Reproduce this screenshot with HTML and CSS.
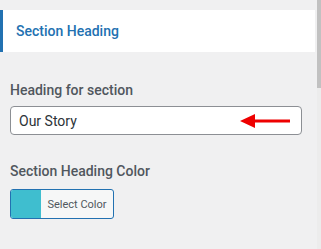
FILE: index.html
```html
<!DOCTYPE html>
<html lang="en">
<head>
    <meta charset="UTF-8">
    <title>Section Heading</title>
    <link rel="stylesheet" href="styles.css">
</head>
<body>
    <div class="panel">
        <!-- section title -->
        <div class="section-title">Section Heading</div>

        <div class="control">
            <label class="control-label" for="heading">Heading for section</label>
            <div class="input-wrap">
                <input type="text" id="heading" class="text-input" value="Our Story">
                <svg class="arrow" width="50" height="16" viewBox="0 0 50 16">
                    <polygon points="0,8 15,1 15,15" fill="#ee0000"/>
                    <rect x="13" y="6.5" width="37" height="3" fill="#ee0000"/>
                </svg>
            </div>
        </div>

        <div class="control color-control">
            <span class="control-label">Section Heading Color</span>
            <button class="color-btn">
                <span class="swatch"></span>
                <span class="color-text">Select Color</span>
            </button>
        </div>
    </div>
    <div class="scrollbar"><div class="thumb"></div></div>
</body>
</html>
```

FILE: styles.css
```css
html, body
{
    margin: 0; padding: 0; height: 100%;
}

body
{
    background-color: #f0f0f1; font-family: Roboto, "Liberation Sans", sans-serif;
    display: flex; overflow: hidden;
}

.panel
{
    flex: 1; padding-top: 10px;
}

.section-title
{
    background-color: #ffffff; border-left: 3px solid #2271b1;
    height: 42px; box-sizing: border-box; margin-right: 2px;
    padding-left: 13px; display: flex; align-items: center;
    font-size: 14px; font-weight: 500; color: #2271b1;
}

.control
{
    padding: 0 10px; margin-top: 30px;
}

.color-control { margin-top: 28px; }

.control-label
{
    display: block; font-size: 14px; line-height: 16px; font-weight: 500; color: #50575e;
    margin-bottom: 8px;
}

.color-control .control-label { margin-bottom: 10px; }

.input-wrap { position: relative; width: 292px; }

.text-input
{
    display: block; width: 100%; height: 29px; box-sizing: border-box;
    border: 1px solid #8c8f94; border-radius: 4px; background-color: #ffffff;
    padding: 0 8px; font-family: inherit; font-size: 14px; color: #2c3338;
}

.arrow
{
    position: absolute; left: 230px; top: 7px;
}

.color-btn
{
    display: flex; padding: 0; width: 104px; height: 30px;
    border: 1px solid #2271b1; border-radius: 3px; overflow: hidden;
    background-color: #f6f7f7; font-family: inherit; cursor: pointer;
}

.swatch
{
    width: 30px; height: 100%; background-color: #3fbecf;
}

.color-text
{
    flex: 1; align-self: center; text-align: center; font-size: 11px; color: #50575e;
}

.scrollbar
{
    width: 4px; background-color: #ececec;
}

.thumb
{
    height: 88px; background-color: #c1c1c1;
}
```
